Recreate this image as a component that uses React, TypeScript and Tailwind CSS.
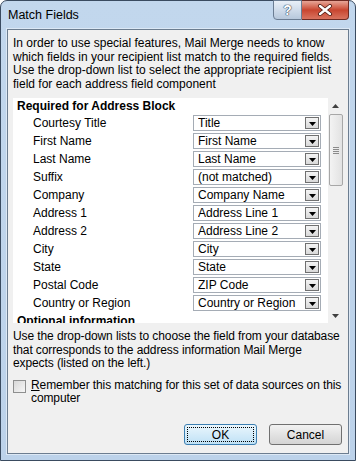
import React from 'react';

const rows: { label: string; value: string }[] = [
  { label: 'Courtesy Title', value: 'Title' },
  { label: 'First Name', value: 'First Name' },
  { label: 'Last Name', value: 'Last Name' },
  { label: 'Suffix', value: '(not matched)' },
  { label: 'Company', value: 'Company Name' },
  { label: 'Address 1', value: 'Address Line 1' },
  { label: 'Address 2', value: 'Address Line 2' },
  { label: 'City', value: 'City' },
  { label: 'State', value: 'State' },
  { label: 'Postal Code', value: 'ZIP Code' },
  { label: 'Country or Region', value: 'Country or Region' },
];

function Combo({ value }: { value: string }) {
  return (
    <div className="flex h-[16px] w-[128px] items-center border border-[#a5acb5] bg-white pl-[4px] pr-[1px]">
      <span className="flex-1 truncate leading-[14px] text-black">{value}</span>
      <div className="flex h-[12px] w-[14px] items-end justify-center border border-[#707070] bg-gradient-to-b from-[#f4f4f4] to-[#d9d9d9] pb-[2px]">
        <svg width="7" height="4" viewBox="0 0 7 4">
          <path d="M0 0h7L3.5 4z" fill="#000" />
        </svg>
      </div>
    </div>
  );
}

function ScrollBar() {
  return (
    <div className="flex w-[15px] flex-col items-center bg-[#f0f0f0]">
      <div className="flex h-[16px] w-full items-center justify-center">
        <svg width="7" height="4" viewBox="0 0 7 4">
          <path d="M0 4h7L3.5 0z" fill="#404040" />
        </svg>
      </div>
      <div className="flex h-[72px] w-[14px] items-center justify-center rounded-[2px] border border-[#a7a7a7] bg-gradient-to-r from-[#f3f3f3] to-[#e2e2e2]">
        <div className="flex flex-col gap-[1px]">
          <div className="h-px w-[6px] bg-[#8a8a8a]" />
          <div className="h-px w-[6px] bg-[#8a8a8a]" />
          <div className="h-px w-[6px] bg-[#8a8a8a]" />
          <div className="h-px w-[6px] bg-[#8a8a8a]" />
        </div>
      </div>
      <div className="flex-1" />
      <div className="flex h-[15px] w-full items-center justify-center">
        <svg width="7" height="4" viewBox="0 0 7 4">
          <path d="M0 0h7L3.5 4z" fill="#404040" />
        </svg>
      </div>
    </div>
  );
}

export default function App() {
  return (
    <div
      className="flex h-[461px] w-[356px] flex-col rounded-t-[7px] border border-[#3a4b60] bg-gradient-to-b from-[#c2d7ed] to-[#bcd2ea] text-[12px] text-black"
      style={{ fontFamily: '"Liberation Sans", Arial, sans-serif' }}
    >
      {/* Title bar */}
      <div className="relative flex h-[28px] items-center pl-[7px]">
        <span className="pt-[1px] text-[12.5px]">Match Fields</span>
        <div className="absolute right-[6px] top-[-1px] flex">
          <div className="flex h-[20px] w-[29px] items-center justify-center rounded-bl-[4px] border border-[#6b7d93] bg-gradient-to-b from-[#e9f0f8] to-[#b7c8dc]">
            <span className="text-[14px] font-bold leading-none text-white [text-shadow:0_0_1px_#34455a,0_0_1px_#34455a,0_0_1px_#34455a]">?</span>
          </div>
          <div className="flex h-[20px] w-[47px] items-center justify-center rounded-br-[4px] border border-l-0 border-[#6e2a22] bg-gradient-to-b from-[#e6a597] via-[#c8452f] to-[#d9735f]">
            <svg width="16" height="12" viewBox="0 0 16 12">
              <path d="M3 2l10 8M13 2L3 10" stroke="#4a1810" strokeWidth="4" strokeLinecap="round" />
              <path d="M3 2l10 8M13 2L3 10" stroke="#fff" strokeWidth="2.4" strokeLinecap="round" />
            </svg>
          </div>
        </div>
      </div>

      {/* Client area */}
      <div className="mx-[6px] mb-[6px] flex flex-1 flex-col border border-[#6c7d90] bg-[#f0f0f0] shadow-[0_0_0_1px_#dce8f5]">
        <p className="px-[5px] pt-[7px] leading-[13.5px]">
          In order to use special features, Mail Merge needs to know which fields in your recipient list match to the required fields. Use the drop-down list to select the appropriate recipient list field for each address field component
        </p>

        <div className="mx-[5px] mt-[7px] flex h-[225px] overflow-hidden">
          <div className="flex-1 overflow-hidden bg-white">
            <div className="h-[16px] pl-[4px] font-bold leading-[16px]">Required for Address Block</div>
            {rows.map((r) => (
              <div key={r.label} className="flex h-[18px] items-center">
                <span className="w-[180px] pl-[20px]">{r.label}</span>
                <Combo value={r.value} />
              </div>
            ))}
            <div className="h-[18px] pl-[4px] font-bold leading-[18px]">Optional information</div>
          </div>
          <ScrollBar />
        </div>

        <p className="whitespace-nowrap px-[5px] pt-[7px] leading-[13.5px] tracking-[-0.1px]">
          Use the drop-down lists to choose the field from your database
          <br />
          that corresponds to the address information Mail Merge
          <br />
          expects (listed on the left.)
        </p>

        <div className="mt-[8px] flex items-start gap-[5px] px-[5px]">
          <div className="mt-[1px] h-[13px] w-[13px] shrink-0 border border-[#8e8f8f] bg-gradient-to-br from-[#d8d8d8] to-[#f6f6f6]" />
          <span className="whitespace-nowrap leading-[13.5px] tracking-[-0.1px]">
            <u>R</u>emember this matching for this set of data sources on this
            <br />
            computer
          </span>
        </div>

        <div className="mt-auto flex justify-end gap-[12px] pb-[8px] pr-[6px]">
          <button className="h-[21px] w-[73px] rounded-[3px] border border-[#3c7fb1] bg-gradient-to-b from-[#eaf6fd] to-[#bfe1f5] p-[2px]">
            <div className="flex h-full w-full items-center justify-center border border-dotted border-black">OK</div>
          </button>
          <button className="flex h-[21px] w-[73px] items-center justify-center rounded-[3px] border border-[#707070] bg-gradient-to-b from-[#f2f2f2] to-[#d4d4d4]">
            Cancel
          </button>
        </div>
      </div>
    </div>
  );
}
